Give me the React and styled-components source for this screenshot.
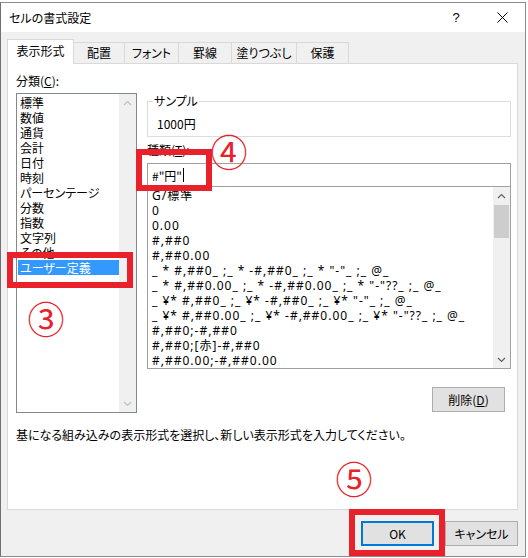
import React from "react";
import styled, { createGlobalStyle } from "styled-components";

const Global = createGlobalStyle`
  html, body { margin: 0; padding: 0; background: #ffffff; }
  body {
    font-family: "Noto Sans CJK JP", "Noto Sans", sans-serif;
    font-size: 12px;
    color: #000;
    font-feature-settings: "palt" 1;
  }
  * { box-sizing: border-box; }
`;

const Page = styled.div`
  width: 528px;
  height: 558px;
  padding-top: 2px;
  background: #ffffff;
`;

const Dialog = styled.div`
  position: relative;
  width: 526px;
  height: 555px;
  border: 1px solid #8c8c8c;
  border-left-color: #707070;
  display: flex;
  flex-direction: column;
  background: #f0f0f0;
`;

const TitleBar = styled.div`
  height: 29px;
  background: #ffffff;
  display: flex;
  align-items: center;
  padding-left: 8px;
`;

const Title = styled.div`
  flex: 1;
  font-size: 12px;
  line-height: 16px;
  margin-top: 1px;
`;

const CaptionButton = styled.div`
  width: 46px;
  height: 29px;
  display: flex;
  align-items: center;
  justify-content: center;
  font-family: "Liberation Sans", sans-serif;
  font-size: 13px;
`;

const Body = styled.div`
  flex: 1;
  padding: 8px 7px 9px 6px;
  display: flex;
  flex-direction: column;
`;

const TabRow = styled.div`
  height: 24px;
  display: flex;
  align-items: flex-end;
  position: relative;
  z-index: 1;
  margin-bottom: -1px;
`;

const Tab = styled.div`
  height: ${(p) => (p.$active ? "25px" : "22px")};
  width: ${(p) => p.$w}px;
  margin-left: ${(p) => (p.$first ? 0 : -1)}px;
  background: ${(p) => (p.$active ? "#ffffff" : "#f0f0f0")};
  border: 1px solid #d9d9d9;
  border-bottom: ${(p) => (p.$active ? "none" : "1px solid #d9d9d9")};
  display: flex;
  align-items: center;
  justify-content: center;
  font-size: 12px;
  line-height: 16px;
  padding-bottom: ${(p) => (p.$active ? "2px" : "0")};
`;

const Panel = styled.div`
  height: 447px;
  width: 511px;
  background: #ffffff;
  border: 1px solid #d9d9d9;
  padding: 9px 0 0 8px;
  display: flex;
  flex-direction: column;
`;

const Columns = styled.div`
  display: grid;
  grid-template-columns: 121px 364px;
  column-gap: 10px;
`;

const LeftCol = styled.div`
  display: flex;
  flex-direction: column;
`;

const Label = styled.div`
  line-height: 16px;
  height: 16px;
  font-size: 12px;
`;

const U = styled.span`
  text-decoration: underline;
  text-underline-offset: 1px;
`;

const ListBox = styled.div`
  margin-top: 4px;
  height: 320px;
  border: 1px solid #828790;
  display: flex;
  background: #fff;
`;

const ListItems = styled.div`
  flex: 1;
  padding: 1px 0 0 1px;
`;

const CatItem = styled.div`
  height: 15px;
  line-height: 15px;
  padding-left: 2px;
  white-space: nowrap;
  background: ${(p) => (p.$sel ? "#3399ff" : "transparent")};
  color: ${(p) => (p.$sel ? "#ffffff" : "#000")};
`;

const ScrollBar = styled.div`
  width: 17px;
  background: #f0f0f0;
  display: flex;
  flex-direction: column;
`;

const ArrowBox = styled.div`
  height: 17px;
  display: flex;
  align-items: center;
  justify-content: center;
`;

const Track = styled.div`
  flex: 1;
  padding: 1px 1px 0 1px;
`;

const Thumb = styled.div`
  height: 33px;
  background: #cdcdcd;
`;

const RightCol = styled.div`
  display: flex;
  flex-direction: column;
`;

const Group = styled.fieldset`
  margin: 21px 0 0 0;
  padding: 0 0 4px 5px;
  border: 1px solid #dcdcdc;
  min-width: 0;
`;

const Legend = styled.legend`
  padding: 0 1px;
  line-height: 14px;
  font-size: 12px;
`;

const SampleValue = styled.div`
  margin-top: 8px;
  padding-left: 4px;
  line-height: 16px;
`;

const TypeLabel = styled(Label)`
  margin-top: 5px;
`;

const Input = styled.div`
  margin-top: 5px;
  height: 23px;
  border: 1px solid #a0a0a0;
  border-bottom: none;
  display: flex;
  align-items: center;
  padding-left: 4px;
  background: #fff;
`;

const Caret = styled.span`
  display: inline-block;
  width: 1px;
  height: 14px;
  background: #000;
  margin-left: 1px;
  vertical-align: middle;
`;

const FormatList = styled.div`
  height: 183px;
  border: 1px solid #a0a0a0;
  display: flex;
  background: #fff;
`;

const FormatItems = styled.div`
  flex: 1;
  padding: 1px 0 0 4px;
  overflow: hidden;
`;

const FormatItem = styled.div`
  height: 15px;
  line-height: 15px;
  white-space: pre;
  font-family: "Noto Sans", "Noto Sans CJK JP", sans-serif;
  font-size: 12px;
  letter-spacing: 1px;
`;

const ButtonRow = styled.div`
  display: flex;
  justify-content: flex-end;
  gap: ${(p) => p.$gap || 0}px;
  padding-right: ${(p) => p.$pr || 0}px;
  margin-top: ${(p) => p.$mt || 0}px;
`;

const Button = styled.div`
  width: ${(p) => p.$w || 73}px;
  height: ${(p) => p.$h || 24}px;
  background: #e1e1e1;
  border: 1px solid ${(p) => (p.$focus ? "#0078d7" : "#adadad")};
  box-shadow: ${(p) => (p.$focus ? "inset 0 0 0 1px #0078d7" : "none")};
  display: flex;
  align-items: center;
  justify-content: center;
  font-size: 12px;
  line-height: 16px;
`;

const Description = styled.div`
  margin-top: 14px;
  line-height: 16px;
  font-size: 12px;
`;

const Footer = styled.div`
  padding-top: 11px;
`;

const RedBox = styled.div`
  position: absolute;
  left: ${(p) => p.$x}px;
  top: ${(p) => p.$y}px;
  width: ${(p) => p.$w}px;
  height: ${(p) => p.$h}px;
  border: 6px solid #e8212b;
  pointer-events: none;
`;

const Circled = styled.div`
  position: absolute;
  left: ${(p) => p.$cx - 20}px;
  top: ${(p) => p.$cy - 22}px;
  width: 40px;
  height: 44px;
  display: flex;
  align-items: center;
  justify-content: center;
  color: #e8212b;
  font-family: "Noto Sans CJK JP", sans-serif;
  font-size: 37px;
  line-height: 44px;
  font-feature-settings: normal;
`;

const Chevron = ({ up, color }) => (
  <svg width="9" height="6" viewBox="0 0 9 6">
    <path
      d={up ? "M1 5 L4.5 1.5 L8 5" : "M1 1 L4.5 4.5 L8 1"}
      fill="none"
      stroke={color}
      strokeWidth="1.2"
    />
  </svg>
);

const tabs = [
  ["表示形式", 67],
  ["配置", 52],
  ["フォント", 55],
  ["罫線", 54],
  ["塗りつぶし", 66],
  ["保護", 53],
];

const categories = [
  "標準",
  "数値",
  "通貨",
  "会計",
  "日付",
  "時刻",
  "パーセンテージ",
  "分数",
  "指数",
  "文字列",
  "その他",
  "ユーザー定義",
];

const formats = [
  "G/標準",
  "0",
  "0.00",
  "#,##0",
  "#,##0.00",
  '_ * #,##0_ ;_ * -#,##0_ ;_ * "-"_ ;_ @_',
  '_ * #,##0.00_ ;_ * -#,##0.00_ ;_ * "-"??_ ;_ @_',
  '_ ¥* #,##0_ ;_ ¥* -#,##0_ ;_ ¥* "-"_ ;_ @_',
  '_ ¥* #,##0.00_ ;_ ¥* -#,##0.00_ ;_ ¥* "-"??_ ;_ @_',
  "#,##0;-#,##0",
  "#,##0;[赤]-#,##0",
  "#,##0.00;-#,##0.00",
];

export default function App() {
  return (
    <Page>
      <Global />
      <Dialog>
        <TitleBar>
          <Title>セルの書式設定</Title>
          <CaptionButton>?</CaptionButton>
          <CaptionButton>
            <svg width="11" height="11" viewBox="0 0 11 11">
              <path d="M0.5 0.5 L10.5 10.5 M10.5 0.5 L0.5 10.5" stroke="#000" strokeWidth="1" />
            </svg>
          </CaptionButton>
        </TitleBar>
        <Body>
          <TabRow>
            {tabs.map(([t, w], i) => (
              <Tab key={t} $w={w} $first={i === 0} $active={i === 0}>
                {t}
              </Tab>
            ))}
          </TabRow>
          <Panel>
            <Columns>
              <LeftCol>
                <Label>
                  分類(<U>C</U>):
                </Label>
                <ListBox>
                  <ListItems>
                    {categories.map((c, i) => (
                      <CatItem key={c} $sel={i === categories.length - 1}>
                        {c}
                      </CatItem>
                    ))}
                  </ListItems>
                  <ScrollBar>
                    <ArrowBox>
                      <Chevron up color="#bfbfbf" />
                    </ArrowBox>
                    <Track />
                    <ArrowBox>
                      <Chevron color="#bfbfbf" />
                    </ArrowBox>
                  </ScrollBar>
                </ListBox>
              </LeftCol>
              <RightCol>
                <Group>
                  <Legend>サンプル</Legend>
                  <SampleValue>1000円</SampleValue>
                </Group>
                <TypeLabel>
                  種類(<U>T</U>):
                </TypeLabel>
                <Input>
                  #"円"<Caret />
                </Input>
                <FormatList>
                  <FormatItems>
                    {formats.map((f) => (
                      <FormatItem key={f}>{f}</FormatItem>
                    ))}
                  </FormatItems>
                  <ScrollBar>
                    <ArrowBox>
                      <Chevron up color="#606060" />
                    </ArrowBox>
                    <Track>
                      <Thumb />
                    </Track>
                    <ArrowBox>
                      <Chevron color="#606060" />
                    </ArrowBox>
                  </ScrollBar>
                </FormatList>
                <ButtonRow $mt={18} $pr={6}>
                  <Button $w={73} $h={25}>
                    削除(<U>D</U>)
                  </Button>
                </ButtonRow>
              </RightCol>
            </Columns>
            <Description>
              基になる組み込みの表示形式を選択し、新しい表示形式を入力してください。
            </Description>
          </Panel>
          <Footer>
            <ButtonRow $gap={11}>
              <Button $w={73} $h={25} $focus>
                OK
              </Button>
              <Button $w={73} $h={25}>
                キャンセル
              </Button>
            </ButtonRow>
          </Footer>
        </Body>
        <RedBox $x={6} $y={249} $w={126} $h={36} />
        <RedBox $x={135} $y={146} $w={76} $h={42} />
        <RedBox $x={348} $y={506} $w={96} $h={47} />
        <Circled $cx={45} $cy={315}>③</Circled>
        <Circled $cx={228} $cy={148}>④</Circled>
        <Circled $cx={353} $cy={475}>⑤</Circled>
      </Dialog>
    </Page>
  );
}
